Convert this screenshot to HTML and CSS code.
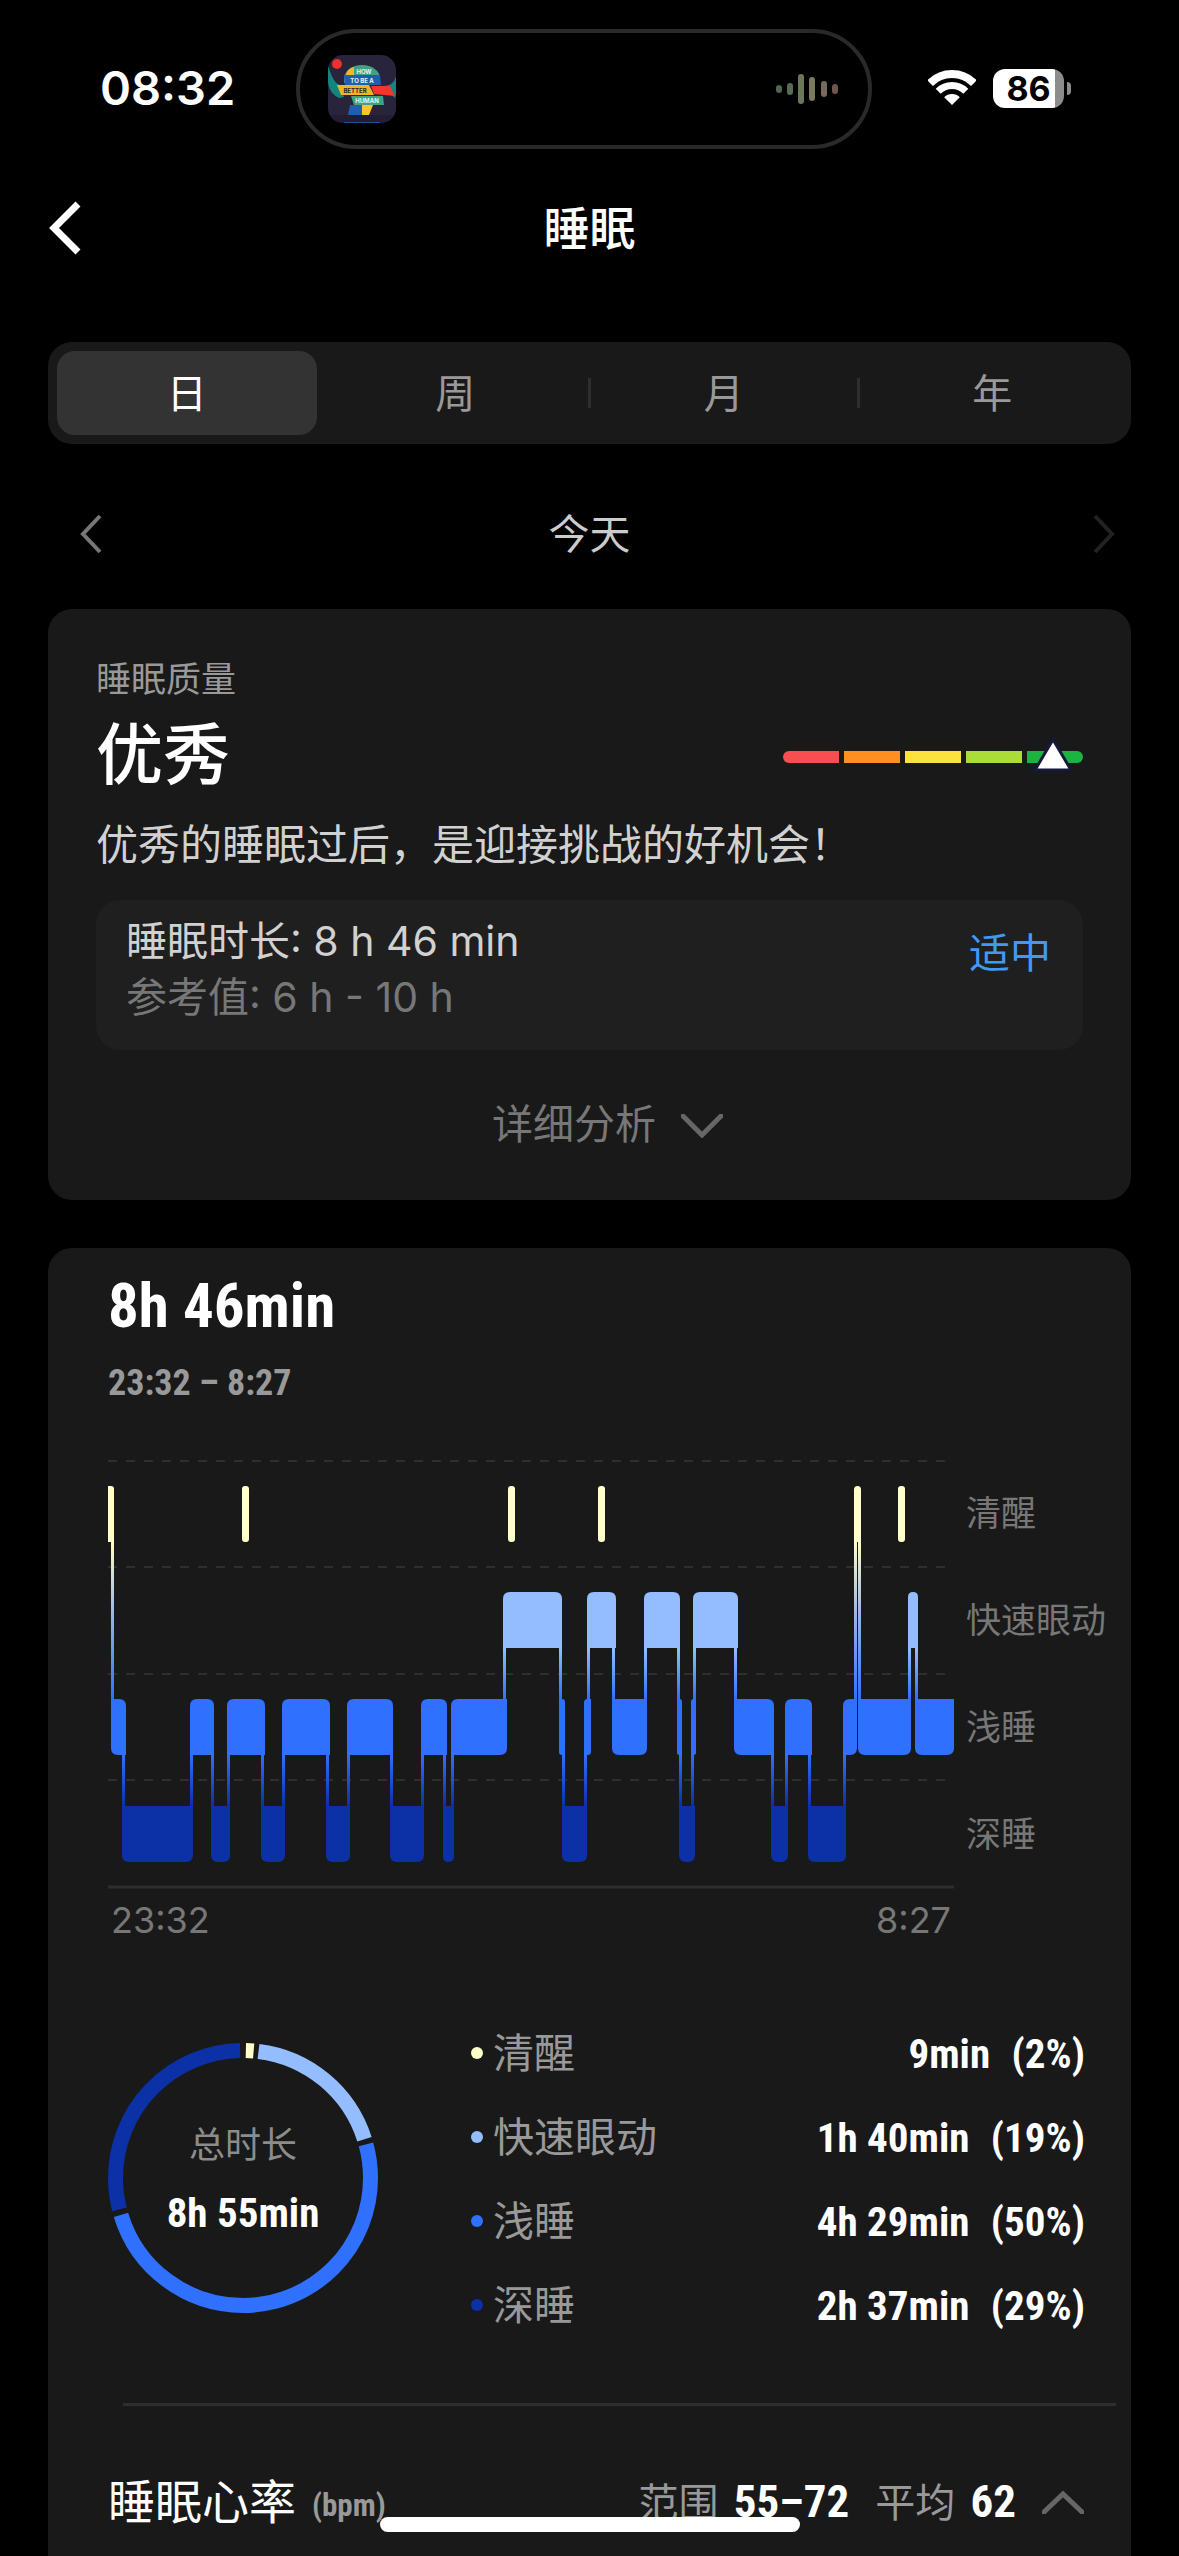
FILE: index.html
```html
<!DOCTYPE html>
<html lang="zh-CN">
<head>
<meta charset="utf-8">
<meta name="viewport" content="width=device-width, initial-scale=1">
<title>睡眠</title>
<link rel="stylesheet" href="styles.css">
</head>
<body>
<div class="status">
  <time class="status-time">08:32</time>
  <div class="island">
    <svg class="cover" viewBox="0 0 68 68" role="img" aria-label="How to be a better human">
      <defs><clipPath id="cover-clip"><rect width="68" height="68" rx="15"/></clipPath></defs>
      <g clip-path="url(#cover-clip)">
        <rect width="68" height="68" fill="#28243c"/>
        <path d="M0 10c3 10 6 18 12 20l4 12-5 1C5 40 0 34 0 26z" fill="#14847f"/>
        <path d="M68 22c-2 6-6 9-13 9l12 12 1-4z" fill="#14847f"/>
        <path d="M16 24c0-8 8-14 18-14s18 6 18 13v5H16z" fill="#3fa283"/>
        <path d="M18 20c1-5 4-7 8-8v8z" fill="#f5b820"/>
        <path d="M16 20h36l1 10H17z" fill="#1f5fae"/>
        <path d="M22 50h12v10H20z" fill="#1f5fae"/><path d="M34 50h11l-4 10h-7z" fill="#fbc42a"/>
        <path d="M9 30h32l5 10H13z" fill="#f3b322"/><path d="M43 31h19l5 10-21-2z" fill="#f4352a"/>
        <path d="M23 41h32l1 9H26z" fill="#3fa283"/>
        <rect y="60" width="68" height="8" fill="#221d33"/><rect x="16" y="67" width="36" height="1" fill="#1c4f90"/>
        <circle cx="9" cy="9" r="5" fill="#ee2f2b"/>
        <g class="cover-text" text-anchor="middle">
          <text x="36" y="19">HOW</text><text x="34" y="28">TO BE A</text>
          <text x="27" y="38" class="cover-dark">BETTER</text><text x="39" y="48">HUMAN</text>
        </g>
      </g>
    </svg>
    <svg class="wave" viewBox="0 0 62 30" aria-hidden="true">
      <g fill="none" stroke-width="6" stroke-linecap="round">
        <path d="M3 14v2" stroke="#4f6653"/><path d="M14 12v6" stroke="#5a6b55"/><path d="M25 3v24" stroke="#6b7858"/>
        <path d="M36 6v18" stroke="#7a7a5c"/><path d="M48 10v10" stroke="#776a5a"/><path d="M59 13v4" stroke="#6e5650"/>
      </g>
    </svg>
  </div>
  <div class="status-icons">
    <svg class="wifi" viewBox="0 0 48 36" role="img" aria-label="Wi-Fi">
      <path d="M24 35l-7.800-7.800a11 11 0 0 1 15.600 0z" fill="#fff"/>
      <path d="M10.200 21.200a19.500 19.500 0 0 1 27.600 0" fill="none" stroke="#fff" stroke-width="7"/>
      <path d="M2.100 13.100a31 31 0 0 1 43.800 0" fill="none" stroke="#fff" stroke-width="8"/>
    </svg>
    <div class="battery"><span>86</span></div>
  </div>
</div>

<header class="header">
  <button class="back" type="button" aria-label="返回">
    <svg viewBox="0 0 34 54"><path d="M30 3L6 27l24 24" fill="none" stroke="#fff" stroke-width="7"/></svg>
  </button>
  <h1>睡眠</h1>
</header>

<main class="page">
  <nav class="tabs">
    <button type="button" class="tab active">日</button>
    <button type="button" class="tab">周</button>
    <button type="button" class="tab divided">月</button>
    <button type="button" class="tab divided">年</button>
  </nav>

  <div class="date">
    <button type="button" class="step back-day" aria-label="前一天"><svg viewBox="0 0 22 40"><path d="M20 2L3 20l17 18"/></svg></button>
    <span class="day">今天</span>
    <button type="button" class="step off" aria-label="后一天" disabled><svg viewBox="0 0 22 40"><path d="M2 2l17 18L2 38"/></svg></button>
  </div>

  <section class="card quality">
    <p class="eyebrow">睡眠质量</p>
    <div class="score">
      <h2>优秀</h2>
      <svg class="gauge" viewBox="0 0 300 36" role="img" aria-label="优秀">
        <path d="M6 14h50v12H6a6 6 0 0 1 0-12z" fill="#f84e50"/>
        <path d="M61 14h56v12H61z" fill="#ff8f1f"/>
        <path d="M122 14h56v12h-56z" fill="#fce23c"/>
        <path d="M183 14h56v12h-56z" fill="#abdd37"/>
        <path d="M244 14h50a6 6 0 0 1 0 12h-50z" fill="#1cb440"/>
        <path d="M270 2.500L252 33h36z" fill="#fff" stroke="#15193a" stroke-width="3"/>
      </svg>
    </div>
    <p class="summary">优秀的睡眠过后，是迎接挑战的好机会！</p>
    <div class="duration">
      <div>
        <p>睡眠时长: 8 h 46 min</p>
        <p class="reference">参考值: 6 h - 10 h</p>
      </div>
      <strong>适中</strong>
    </div>
    <button type="button" class="more">详细分析
      <svg viewBox="0 0 42 24"><path d="M2 2l19 19L40 2"/></svg>
    </button>
  </section>

  <section class="card stages">
    <h2 class="total">8h 46min</h2>
    <p class="range">23:32 – 8:27</p>

    <div class="chart">
      <div class="plot">
        <svg id="hypnogram" viewBox="0 0 846 430" role="img" aria-label="睡眠阶段">
          <defs>
            <linearGradient id="awake-light" gradientUnits="userSpaceOnUse" x1="0" y1="82" x2="0" y2="239">
              <stop offset="0" stop-color="#ffffc8"/><stop offset=".5" stop-color="#94b0e8"/><stop offset="1" stop-color="#2f70ff"/>
            </linearGradient>
            <linearGradient id="rem-light" gradientUnits="userSpaceOnUse" x1="0" y1="188" x2="0" y2="239">
              <stop offset="0" stop-color="#93bdff"/><stop offset="1" stop-color="#2f70ff"/>
            </linearGradient>
            <linearGradient id="light-deep" gradientUnits="userSpaceOnUse" x1="0" y1="295" x2="0" y2="346">
              <stop offset="0" stop-color="#2f70ff"/><stop offset="1" stop-color="#0c30a6"/>
            </linearGradient>
          </defs>
          <path class="grid" d="M0 1h846M0 107h846M0 214h846M0 320h846"/>
          <path class="axis" d="M0 427h846"/>
        </svg>
        <div class="ticks"><span>23:32</span><span>8:27</span></div>
      </div>
      <ul class="levels"><li>清醒</li><li>快速眼动</li><li>浅睡</li><li>深睡</li></ul>
    </div>

    <div class="breakdown">
      <div class="donut">
        <svg viewBox="0 0 270 270" aria-hidden="true">
          <g transform="rotate(-90 135 135)">
            <circle cx="135" cy="135" r="127.500" pathLength="360" stroke="#ffffc8" stroke-dasharray="3.500 356.500" stroke-dashoffset="-1.300"/>
            <circle cx="135" cy="135" r="127.500" pathLength="360" stroke="#93bdff" stroke-dasharray="65.300 294.700" stroke-dashoffset="-7"/>
            <circle cx="135" cy="135" r="127.500" pathLength="360" stroke="#2f70ff" stroke-dasharray="178.500 181.500" stroke-dashoffset="-74.700"/>
            <circle cx="135" cy="135" r="127.500" pathLength="360" stroke="#0c30a6" stroke-dasharray="103 257" stroke-dashoffset="-255.700"/>
          </g>
        </svg>
        <div class="donut-text"><span>总时长</span><b>8h 55min</b></div>
      </div>
      <table class="legend">
        <tr><th scope="row" class="awake">清醒</th><td>9min <span>(2%)</span></td></tr>
        <tr><th scope="row" class="rem">快速眼动</th><td>1h 40min <span>(19%)</span></td></tr>
        <tr><th scope="row" class="light">浅睡</th><td>4h 29min <span>(50%)</span></td></tr>
        <tr><th scope="row" class="deep">深睡</th><td>2h 37min <span>(29%)</span></td></tr>
      </table>
    </div>

    <button type="button" class="heart">
      <span class="heart-title">睡眠心率</span><span class="unit">(bpm)</span>
      <span class="stat">范围 <b>55–72</b></span>
      <span class="stat">平均 <b>62</b></span>
      <svg viewBox="0 0 42 24"><path d="M2 22L21 4l19 18"/></svg>
    </button>
  </section>
</main>
<div class="home-bar"></div>
<script src="chart.js"></script>
</body>
</html>
```
FILE: styles.css
```css
* { box-sizing: border-box; margin: 0; padding: 0; }

body {
  min-height: 100vh;
  display: flex;
  flex-direction: column;
  background: #000;
  color: #fff;
  font-family: Inter, "Noto Sans CJK SC", sans-serif;
  font-size: 41px;
}

button {
  border: 0;
  background: none;
  color: inherit;
  font: inherit;
}

svg { display: block; fill: none; }

/* status bar */
.status {
  display: grid;
  grid-template-columns: 1fr 576px 1fr;
  height: 178px;
  padding: 29px 11px 0 0;
  align-items: start;
}
.status-time {
  padding-left: 100px;
  font-size: 47px;
  font-weight: 600;
  line-height: 118px;
}
.island {
  display: flex;
  align-items: center;
  justify-content: space-between;
  height: 120px;
  padding: 0 30px 0 28px;
  border: 4px solid #292929;
  border-radius: 60px;
}
.cover { width: 68px; height: 68px; }
.cover-text { font: 700 6px Inter, sans-serif; fill: #e6f3ee; }
.cover-dark { fill: #2b2430; }
.wave { width: 62px; height: 30px; }
.status-icons {
  display: flex;
  align-items: center;
  gap: 17px;
  height: 118px;
  padding-left: 56px;
}
.wifi { width: 48px; height: 36px; }
.battery {
  position: relative;
  width: 71px;
  height: 39px;
  border-radius: 12px;
  background: linear-gradient(90deg, #fff 87%, #8c8c8c 87%);
  color: #000;
  font-size: 34px;
  font-weight: 700;
  line-height: 39px;
  text-align: center;
}
.battery::after {
  content: "";
  position: absolute;
  left: 74px;
  top: 13px;
  width: 4px;
  height: 13px;
  border-radius: 0 4px 4px 0;
  background: #8c8c8c;
}

/* title bar */
.header {
  display: grid;
  grid-template-columns: 1fr auto 1fr;
  align-items: center;
  height: 100px;
  padding: 0 48px;
}
.header h1 { font-size: 46px; font-weight: 500; line-height: 60px; }
.back { justify-self: start; }
.back svg { width: 34px; height: 54px; }

.page {
  flex: 1;
  display: flex;
  flex-direction: column;
  padding: 64px 48px 0;
}

/* period switch */
.tabs {
  display: grid;
  grid-template-columns: repeat(4, 1fr);
  gap: 9px;
  padding: 9px;
  border-radius: 24px;
  background: #191919;
}
.tab {
  position: relative;
  height: 84px;
  padding-bottom: 4px;
  border-radius: 18px;
  color: #999;
  font-size: 40px;
}
.tab.active { background: #333; color: #fff; }
.tab.divided::before {
  content: "";
  position: absolute;
  left: -6px;
  top: 27px;
  width: 3px;
  height: 30px;
  background: #2e2e2e;
}

.date {
  display: grid;
  grid-template-columns: 1fr auto 1fr;
  align-items: center;
  height: 120px;
  margin: 30px 0 15px;
  padding: 0 16px;
  color: #ccc;
}
.day { padding-bottom: 6px; }
.step { justify-self: end; }
.step.back-day { justify-self: start; padding-left: 16px; }
.step svg { width: 22px; height: 40px; stroke: #777; stroke-width: 4; }
.step.off svg { stroke: #222; }

.card {
  border-radius: 24px;
  background: #191919;
}

/* quality card */
.quality { margin-bottom: 48px; padding: 48px 48px 0; }
.eyebrow { color: #999; font-size: 35px; line-height: 44px; }
.score {
  display: flex;
  align-items: center;
  justify-content: space-between;
}
.score h2 { font-size: 67px; font-weight: 500; line-height: 108px; }
.gauge { width: 300px; height: 36px; }
.summary { margin-top: 6px; color: #d1d1d1; font-size: 42px; line-height: 60px; }
.duration {
  display: flex;
  justify-content: space-between;
  margin-top: 25px;
  padding: 13px 32px 25px 30px;
  border-radius: 24px;
  background: #1f1f1f;
  color: #d1d1d1;
  line-height: 56px;
}
.reference { color: #777; }
.duration strong { color: #4099f7; font-weight: 400; line-height: 80px; }
.more {
  display: flex;
  align-items: center;
  justify-content: center;
  gap: 25px;
  width: 100%;
  height: 150px;
  padding: 0 0 8px 36px;
  color: #777;
}
.more svg { width: 42px; height: 24px; margin-top: 10px; stroke: #666; stroke-width: 5; stroke-linecap: round; }

/* stages card */
.stages {
  flex: 1;
  padding: 21px 0 0 60px;
  border-radius: 24px 24px 0 0;
}
.total, .range, .donut b, .legend td, .unit, .stat b {
  font-family: "Roboto Condensed", Roboto, sans-serif;
  font-weight: 700;
}
.total { font-size: 61px; line-height: 74px; }
.range { margin-top: 18px; color: #999; font-size: 36px; line-height: 44px; }

.chart {
  display: grid;
  grid-template-columns: 1fr 165px;
  gap: 12px;
  margin-top: 55px;
}
.plot svg { width: 100%; height: auto; }
.grid { stroke: #2e2e2e; stroke-width: 2; stroke-dasharray: 9 9; }
.axis { stroke: #2e2e2e; stroke-width: 3; }
.ticks {
  display: flex;
  justify-content: space-between;
  padding: 0 3px;
  color: #777;
  font-size: 36px;
  line-height: 60px;
}
.levels { list-style: none; color: #777; font-size: 35px; line-height: 107px; }

.breakdown {
  display: flex;
  gap: 93px;
  margin-top: 62px;
  padding-right: 46px;
}
.donut { position: relative; width: 270px; height: 270px; margin-top: 31px; }
.donut circle { stroke-width: 15; }
.donut-text {
  position: absolute;
  inset: 68px 0 0;
  display: flex;
  flex-direction: column;
  align-items: center;
  color: #8c8c8c;
  font-size: 36px;
  line-height: 68px;
}
.donut b { color: #fff; font-size: 41px; }

.legend { flex: 1; border-collapse: collapse; line-height: 60px; }
.legend tr { height: 84px; }
.legend th { padding-bottom: 2px; color: #999; font-weight: 400; text-align: left; }
.legend th::before {
  content: "";
  display: inline-block;
  width: 12px;
  height: 12px;
  margin-right: 10px;
  border-radius: 50%;
  vertical-align: 9px;
  background: var(--dot);
}
.awake { --dot: #ffffc8; }
.rem { --dot: #93bdff; }
.light { --dot: #2f70ff; }
.deep { --dot: #0c30a6; }
.legend td { font-size: 41px; text-align: right; }
.legend td span { margin-left: 12px; }

.heart {
  display: flex;
  align-items: center;
  width: calc(100% - 15px);
  margin: 55px 15px 0 0;
  padding: 60px 32px 18px 0;
  line-height: 70px;
  background: linear-gradient(#2e2e2e, #2e2e2e) 15px 0 / 100% 3px no-repeat;
}
.heart-title { font-size: 47px; }
.unit { margin: 8px auto 0 16px; color: #999; font-size: 31px; }
.stat { margin-right: 26px; color: #999; font-size: 40px; }
.stat b { margin-left: 4px; color: #fff; font-size: 45px; }
.heart svg { width: 42px; height: 24px; stroke: #666; stroke-width: 5; stroke-linecap: round; }

.home-bar {
  position: fixed;
  left: 50%;
  bottom: 24px;
  width: 420px;
  height: 15px;
  margin-left: -210px;
  border-radius: 8px;
  background: #fff;
}
```
FILE: chart.js
```js
// Stages from top to bottom: 0 awake, 1 REM, 2 light, 3 deep.
const COLORS = ['#ffffc8', '#93bdff', '#2f70ff', '#0c30a6'];
const TOPS = [26, 132, 239, 346];
const HEIGHT = 56;

// One night in order: [stage, start, end].
const night = [
  [0, 0, 6], [2, 3, 18], [3, 14, 85], [2, 82, 106], [3, 103, 122], [2, 119, 157],
  [3, 153, 177], [2, 174, 222], [3, 218, 242], [2, 239, 285], [3, 282, 316],
  [2, 313, 339], [3, 335, 346], [2, 343, 399], [1, 395, 454], [2, 451, 457],
  [3, 454, 479], [2, 476, 483], [1, 479, 508], [2, 504, 539], [1, 536, 572],
  [2, 569, 574], [3, 571, 587], [2, 583, 588], [1, 585, 630], [2, 626, 666],
  [3, 663, 680], [2, 677, 704], [3, 700, 738], [2, 735, 749], [0, 746, 753],
  [2, 750, 803], [1, 800, 810], [2, 807, 846]
];
const wakeUps = [[134, 141], [400, 407], [490, 497], [790, 797]];

const svg = document.getElementById('hypnogram');

function draw(d, fill) {
  const path = document.createElementNS('http://www.w3.org/2000/svg', 'path');
  path.setAttribute('d', d);
  path.setAttribute('fill', fill);
  svg.appendChild(path);
}

// Corners: radii for top left, top right, bottom right, bottom left.
function bar(stage, x1, x2, [tl, tr, br, bl]) {
  const y1 = TOPS[stage], y2 = y1 + HEIGHT;
  draw(`M${x1 + tl} ${y1}H${x2 - tr}q${tr} 0 ${tr} ${tr}V${y2 - br}q0 ${br} ${-br} ${br}` +
    `H${x1 + bl}q${-bl} 0 ${-bl} ${-bl}V${y1 + tl}q0 ${-tl} ${tl} ${-tl}z`, COLORS[stage]);
}

night.forEach(([stage, x1, x2], i) => {
  const r = Math.min(7, (x2 - x1) / 2);
  const before = night[i - 1], after = night[i + 1];
  const up = n => n && n[0] < stage, down = n => n && n[0] > stage;
  bar(stage, x1, x2, [
    !before || up(before) ? 0 : r, !after || up(after) ? 0 : r,
    down(after) ? 0 : r, !before || down(before) ? 0 : r
  ]);
});

night.slice(1).forEach(([stage, x1], i) => {
  const from = night[i][0];
  const high = Math.min(from, stage), low = Math.max(from, stage);
  const fill = high === 0 ? 'awake-light' : high === 1 ? 'rem-light' : 'light-deep';
  draw(`M${x1} ${TOPS[high] + HEIGHT - 1}h3V${TOPS[low] + 1}h-3z`, `url(#${fill})`);
});

wakeUps.forEach(([x1, x2]) => bar(0, x1, x2, [3, 3, 3, 3]));
```
